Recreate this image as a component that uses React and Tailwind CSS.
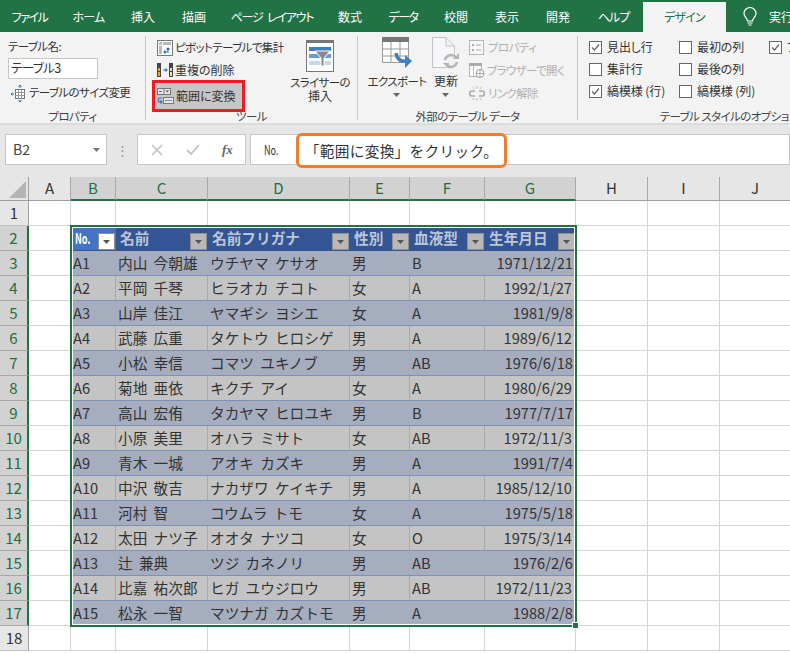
import React from "react";

const font = { fontFamily: '"Noto Sans CJK JP", sans-serif' };

const tabs = [
  ["ファイル", "w-[59px] tracking-[-1.5px]"],
  ["ホーム", "w-[59px] tracking-[-0.8px]"],
  ["挿入", "w-[50px]"],
  ["描画", "w-[52px]"],
  ["ページ レイアウト", "w-[104px] tracking-[-1.2px] [word-spacing:3px]"],
  ["数式", "w-[52px]"],
  ["データ", "w-[54px] tracking-[-1.5px]"],
  ["校閲", "w-[52px]"],
  ["表示", "w-[50px]"],
  ["開発", "w-[52px]"],
  ["ヘルプ", "w-[59px] tracking-[-1px]"],
];

const rows = [
  ["A1", "内山 今朝雄", "ウチヤマ ケサオ", "男", "B", "1971/12/21"],
  ["A2", "平岡 千琴", "ヒラオカ チコト", "女", "A", "1992/1/27"],
  ["A3", "山岸 佳江", "ヤマギシ ヨシエ", "女", "A", "1981/9/8"],
  ["A4", "武藤 広重", "タケトウ ヒロシゲ", "男", "A", "1989/6/12"],
  ["A5", "小松 幸信", "コマツ ユキノブ", "男", "AB", "1976/6/18"],
  ["A6", "菊地 亜依", "キクチ アイ", "女", "A", "1980/6/29"],
  ["A7", "高山 宏侑", "タカヤマ ヒロユキ", "男", "B", "1977/7/17"],
  ["A8", "小原 美里", "オハラ ミサト", "女", "AB", "1972/11/3"],
  ["A9", "青木 一城", "アオキ カズキ", "男", "A", "1991/7/4"],
  ["A10", "中沢 敬吉", "ナカザワ ケイキチ", "男", "A", "1985/12/10"],
  ["A11", "河村 智", "コウムラ トモ", "女", "A", "1975/5/18"],
  ["A12", "太田 ナツ子", "オオタ ナツコ", "女", "O", "1975/3/14"],
  ["A13", "辻 兼典", "ツジ カネノリ", "男", "AB", "1976/2/6"],
  ["A14", "比嘉 祐次郎", "ヒガ ユウジロウ", "男", "AB", "1972/11/23"],
  ["A15", "松永 一智", "マツナガ カズトモ", "男", "A", "1988/2/8"],
];

const grid = "grid grid-cols-[29px_42px_45px_92px_142px_60px_75px_91px_72px_72px_71px]";

function Check({ on, label }) {
  return (
    <div className="flex h-[22px] items-center gap-[5px] whitespace-nowrap text-[12px] tracking-[-0.1px]">
      <span className="flex h-[13px] w-[13px] shrink-0 items-center justify-center border border-[#666] bg-white">
        {on && (
          <svg width="11" height="11" viewBox="0 0 11 11">
            <path d="M2 5.5 L4.5 8 L9 2.5" fill="none" stroke="#666" strokeWidth="1.2" />
          </svg>
        )}
      </span>
      <span>{label}</span>
    </div>
  );
}

function Group({ width, label, children, last }) {
  return (
    <>
      <div className={`flex h-[88px] shrink-0 flex-col ${width}`}>
        <div className="min-h-0 flex-1">{children}</div>
        <div className="h-[16px] whitespace-nowrap text-center leading-[16px] text-[#444]">{label}</div>
      </div>
      {!last && <div className="h-[84px] w-px shrink-0 bg-[#c6c6c6]" />}
    </>
  );
}

function Arrow({ color = "#444" }) {
  return (
    <svg width="8" height="4" viewBox="0 0 8 4" className="block">
      <path d="M0 0 H7 L3.5 4 Z" fill={color} />
    </svg>
  );
}

function PivotIcon() {
  return (
    <svg width="16" height="16" viewBox="0 0 16 16" className="shrink-0">
      <rect x="0.5" y="0.5" width="15" height="15" fill="#fff" stroke="#777" />
      <rect x="2" y="2" width="3" height="3" fill="#bbb" />
      <rect x="6" y="2" width="8" height="3" fill="#bbb" />
      <rect x="2" y="6" width="3" height="8" fill="#bbb" />
      <path d="M7 12 H11 V8 M9.5 9.5 L11 8 L12.5 9.5 M8.5 10.5 L7 12 L8.5 13.5" fill="none" stroke="#2b74b8" strokeWidth="1.2" />
    </svg>
  );
}

function DupIcon() {
  return (
    <svg width="16" height="16" viewBox="0 0 16 16" className="shrink-0">
      <rect x="0" y="1" width="4" height="14" fill="#444" />
      <rect x="12" y="1" width="4" height="14" fill="#444" />
      <rect x="1" y="6" width="2" height="3" fill="#e8a33d" />
      <rect x="1" y="10" width="2" height="4" fill="#e8a33d" />
      <rect x="13" y="6" width="2" height="3" fill="#f3d9a8" />
      <rect x="13" y="10" width="2" height="4" fill="#f3d9a8" />
      <path d="M6 8 H10 M8.5 6.5 L10 8 L8.5 9.5" fill="none" stroke="#2b74b8" strokeWidth="1.1" />
    </svg>
  );
}

function ConvertIcon() {
  return (
    <svg width="17" height="17" viewBox="0 0 17 17" className="shrink-0">
      <rect x="0.5" y="0.5" width="13" height="6" fill="#e6e6e6" stroke="#777" />
      <line x1="7" y1="0.5" x2="7" y2="6.5" stroke="#777" />
      <rect x="2" y="3" width="3" height="1" fill="#2b74b8" />
      <path d="M8.5 2.5 H12 L10.2 4.5 Z" fill="#555" />
      <rect x="6.5" y="9.5" width="10" height="6" fill="#e6e6e6" stroke="#777" />
      <line x1="8" y1="12.5" x2="15" y2="12.5" stroke="#888" />
      <path d="M5 10 H3 C1.5 10 1 11 1 12 C1 13 1.5 14 3 14 H5 M3.5 12.5 L5 14 L3.5 15.5" fill="none" stroke="#2b74b8" strokeWidth="1.1" />
    </svg>
  );
}

function SlicerIcon() {
  return (
    <svg width="28" height="32" viewBox="0 0 28 32" className="block">
      <rect x="0.5" y="0.5" width="27" height="31" fill="#fff" stroke="#777" />
      <rect x="0" y="0" width="28" height="3" fill="#777" />
      <rect x="3" y="7" width="22" height="4" fill="#3f7fc0" />
      <rect x="3" y="14" width="22" height="4" fill="#6c9dd0" />
      <rect x="3" y="21" width="22" height="4" fill="#c5d9ef" />
      <path d="M9 11 H24 L18 18 V27 L15 25 V18 Z" fill="#8a8a8a" stroke="#fff" />
    </svg>
  );
}

function ExportIcon() {
  return (
    <svg width="32" height="33" viewBox="0 0 32 33" className="block">
      <rect x="1" y="0" width="27" height="5" fill="#777" />
      <path d="M1.5 5 V25.5 H27.5 V5 M1.5 12 H27.5 M1.5 19 H27.5 M10 5 V25 M19 5 V25" fill="#fff" stroke="#999" />
      <path d="M15 16 C16 23 20 25 27 24" fill="none" stroke="#3f7fc0" strokeWidth="3.5" />
      <path d="M24 18 L31 24 L24 31 Z" fill="#3f7fc0" />
    </svg>
  );
}

function RefreshIcon() {
  return (
    <svg width="28" height="33" viewBox="0 0 28 33" className="block">
      <path d="M0.5 0.5 H14 L22.5 9 V30.5 H0.5 Z M14 0.5 V9 H22.5" fill="#f8f6fa" stroke="#c4c4c4" />
      <circle cx="19" cy="24" r="8" fill="#f3f3f3" />
      <path d="M13 23 A6 6 0 0 1 24 21 M25 25 A6 6 0 0 1 14 27" fill="none" stroke="#b4b4b4" strokeWidth="2.5" />
      <path d="M21 22 H27 V16 Z M11 26 H17 V32 Z" fill="#b4b4b4" />
    </svg>
  );
}

function PropIcon() {
  return (
    <svg width="15" height="15" viewBox="0 0 15 15" className="shrink-0">
      <rect x="0.5" y="0.5" width="14" height="14" fill="#f8f8f8" stroke="#b5b5b5" />
      <rect x="3" y="4" width="2" height="2" fill="#aaa" />
      <rect x="3" y="9" width="2" height="2" fill="#aaa" />
      <line x1="7" y1="5" x2="12" y2="5" stroke="#aaa" />
      <line x1="7" y1="10" x2="12" y2="10" stroke="#aaa" />
    </svg>
  );
}

function BrowserIcon() {
  return (
    <svg width="16" height="15" viewBox="0 0 16 15" className="shrink-0">
      <rect x="0.5" y="0.5" width="12" height="13" fill="#fff" stroke="#b5b5b5" />
      <rect x="0" y="0" width="13" height="3" fill="#aaa" />
      <line x1="4.5" y1="3" x2="4.5" y2="13" stroke="#bbb" />
      <circle cx="11" cy="10.5" r="4" fill="#fff" stroke="#999" />
      <path d="M7 10.5 H15 M11 6.5 V14.5" stroke="#aaa" />
    </svg>
  );
}

function LinkIcon() {
  return (
    <svg width="16" height="16" viewBox="0 0 16 16" className="shrink-0">
      <path d="M6 5 H3 A2.5 2.5 0 0 0 3 10 H6 M10 5 H13 A2.5 2.5 0 0 1 13 10 H10" fill="none" stroke="#aaa" strokeWidth="1.6" />
      <path d="M8 0 V3 M4 1 L5 3 M12 1 L11 3 M8 12 V15 M4 14 L5 12 M12 14 L11 12" stroke="#bbb" />
    </svg>
  );
}

function ResizeIcon() {
  return (
    <svg width="17" height="17" viewBox="0 0 17 17" className="shrink-0">
      <rect x="4.5" y="4.5" width="9" height="9" fill="#fff" stroke="#777" />
      <path d="M4.5 7.5 H13.5 M4.5 10.5 H13.5 M7.5 4.5 V13.5 M10.5 4.5 V13.5" stroke="#999" />
      <path d="M9 0 V3 M7.5 1.5 L9 0 L10.5 1.5 M9 15 V17 M7.5 15.5 L9 17 L10.5 15.5 M0 9 H3 M1.5 7.5 L0 9 L1.5 10.5" fill="none" stroke="#2b74b8" />
    </svg>
  );
}

function FilterBtn({ active }) {
  return (
    <span
      className={`absolute right-[1px] top-[7px] flex h-[17px] w-[17px] items-center justify-center border border-[#8f8f8f] ${active ? "bg-white" : "bg-[#b8b8b8]"}`}
    >
      <Arrow color="#555" />
    </span>
  );
}

function ColHead({ label, selected }) {
  return (
    <div
      className={`flex h-[24px] items-center justify-center border-r border-[#a8a8a8] text-[15px] ${
        selected ? "bg-[#d2d2d2] text-[#1e6e42]" : "bg-[#e6e6e6] text-[#333]"
      } ${selected ? "border-b-2 border-b-[#217346]" : "border-b border-b-[#9f9f9f]"}`}
    >
      {label}
    </div>
  );
}

function RowHead({ n, selected }) {
  return (
    <div
      className={`flex h-[25px] items-center justify-center border-b text-[15px] ${
        selected
          ? "border-[#a8a8a8] border-r-2 border-r-[#217346] bg-[#d2d2d2] text-[#1e6e42]"
          : "border-[#c0c0c0] border-r border-r-[#9f9f9f] bg-[#e6e6e6] text-[#333]"
      }`}
    >
      {n}
    </div>
  );
}

function Empty() {
  return <div className="h-[25px] border-b border-r border-[#d4d4d4] bg-white" />;
}

export default function App() {
  return (
    <div className="relative h-[653px] w-[790px] overflow-hidden bg-white text-[#333]" style={font}>
      {/* tabs */}
      <div className="flex h-[32px] items-end bg-[#217346] text-[12px] text-white [font-feature-settings:'palt']">
        {tabs.map(([t, w]) => (
          <div key={t} className={`flex h-[30px] shrink-0 items-center justify-center ${w} whitespace-nowrap`}>
            {t}
          </div>
        ))}
        <div className="flex h-[30px] w-[83px] shrink-0 items-center justify-center bg-[#f3f3f3] tracking-[-0.8px] text-[#217346]">デザイン</div>
        <div className="ml-[17px] flex h-[30px] shrink-0 items-center gap-[12px] whitespace-nowrap">
          <svg width="14" height="20" viewBox="0 0 14 20">
            <path d="M4.5 14 C4.5 11 1 10 1 6.5 A6 6 0 0 1 13 6.5 C13 10 9.5 11 9.5 14 Z" fill="none" stroke="#fff" strokeWidth="1.2" />
            <path d="M4.5 16 H9.5 M5.5 18 H8.5" stroke="#fff" strokeWidth="1.2" />
          </svg>
          <span>実行</span>
        </div>
      </div>

      {/* ribbon */}
      <div className="flex h-[93px] items-start overflow-hidden border-b-2 border-[#dcdcdc] bg-[#f3f3f3] pt-[4px] text-[11.5px] tracking-[-0.6px] text-[#333] [font-feature-settings:'palt']">
        <Group width="w-[145px]" label="プロパティ">
          <div className="pl-[8px] pt-[1px]">
            <div className="h-[18px] leading-[18px]">テーブル名:</div>
            <div className="mt-[3px] flex h-[21px] w-[90px] items-center border border-[#c6c6c6] bg-white pl-[2px] text-[12.5px]">テーブル3</div>
            <div className="mt-[3px] flex h-[22px] items-center gap-[1px] pl-[3px] whitespace-nowrap">
              <ResizeIcon />
              <span>テーブルのサイズ変更</span>
            </div>
          </div>
        </Group>
        <Group width="w-[211px]" label="ツール">
          <div className="flex pl-[6px]">
            <div className="w-[133px] shrink-0">
              <div className="flex h-[23px] items-center gap-[2px] pl-[5px] whitespace-nowrap"><PivotIcon /><span>ピボットテーブルで集計</span></div>
              <div className="flex h-[21px] items-center gap-[2px] pl-[5px] text-[12px] tracking-normal whitespace-nowrap"><DupIcon /><span>重複の削除</span></div>
              <div className="flex h-[32px] w-[93px] items-center gap-[2px] border-[3px] border-[#ed1c24] bg-[#c6c6c6] pl-[2px] text-[12px] tracking-normal whitespace-nowrap"><ConvertIcon /><span>範囲に変換</span></div>
            </div>
            <div className="flex w-[70px] shrink-0 flex-col items-center pt-[4px] text-center leading-[14px]">
              <SlicerIcon />
              <div className="mt-[3px] whitespace-nowrap">スライサーの<br /><span className="text-[12px] tracking-normal">挿入</span></div>
            </div>
          </div>
        </Group>
        <Group width="w-[219px]" label="外部のテーブル データ">
          <div className="flex pl-[10px]">
            <div className="flex w-[58px] shrink-0 flex-col items-center pt-[1px]">
              <ExportIcon />
              <div className="mt-[2px] h-[18px] leading-[18px] whitespace-nowrap">エクスポート</div>
              <div className="mt-[3px]"><Arrow color="#666" /></div>
            </div>
            <div className="flex w-[40px] shrink-0 flex-col items-center pt-[1px]">
              <RefreshIcon />
              <div className="mt-[2px] h-[18px] text-[12px] leading-[18px] tracking-normal">更新</div>
              <div className="mt-[3px]"><Arrow color="#666" /></div>
            </div>
            <div className="pl-[3px] text-[#b0b0b0]">
              <div className="flex h-[23px] items-center gap-[4px] whitespace-nowrap"><PropIcon /><span>プロパティ</span></div>
              <div className="flex h-[23px] items-center gap-[2px] whitespace-nowrap"><BrowserIcon /><span>ブラウザーで開く</span></div>
              <div className="flex h-[23px] items-center gap-[3px] whitespace-nowrap"><LinkIcon /><span>リンク解除</span></div>
            </div>
          </div>
        </Group>
        <Group width="w-[302px]" label="テーブル スタイルのオプション" last>
          <div className="flex pl-[11px]">
            <div className="w-[90px] shrink-0">
              <Check on label="見出し行" />
              <Check label="集計行" />
              <Check on label="縞模様 (行)" />
            </div>
            <div className="w-[90px] shrink-0">
              <Check label="最初の列" />
              <Check label="最後の列" />
              <Check label="縞模様 (列)" />
            </div>
            <div className="shrink-0"><Check on label="フィルター ボタン" /></div>
          </div>
        </Group>
      </div>

      {/* formula bar */}
      <div className="flex h-[52px] items-start border-b border-[#e6e6e6] bg-[#e6e6e6] pt-[9px]">
        <div className="ml-[5px] flex h-[31px] w-[102px] shrink-0 items-center justify-between border border-[#c6c6c6] bg-white pl-[7px] pr-[5px] text-[14px] text-[#444]">
          <span>B2</span>
          <Arrow color="#777" />
        </div>
        <div className="flex h-[31px] w-[30px] shrink-0 items-center justify-center text-[13px] leading-none text-[#999]">⋮</div>
        <div className="flex h-[31px] w-[109px] shrink-0 items-center border border-[#c6c6c6] bg-white text-[#bbb]">
          <svg width="12" height="12" viewBox="0 0 12 12" className="ml-[13px]"><path d="M1 1 L11 11 M11 1 L1 11" stroke="#c0c0c0" strokeWidth="1.6" /></svg>
          <svg width="14" height="12" viewBox="0 0 14 12" className="ml-[23px]"><path d="M1 6 L5 10 L13 1" fill="none" stroke="#c0c0c0" strokeWidth="1.8" /></svg>
          <span className="ml-[22px] text-[13px] font-bold italic text-[#666]" style={{ fontFamily: '"Liberation Serif", serif' }}>fx</span>
        </div>
        <div className="ml-[4px] flex h-[31px] flex-1 items-center border border-[#c6c6c6] bg-white pl-[13px] text-[#333]">
          <span className="inline-block origin-left scale-x-[0.7] text-[13px]">No.</span>
        </div>
      </div>

      {/* callout */}
      <div className="absolute left-[296px] top-[133px] flex h-[35px] w-[211px] items-center justify-center whitespace-nowrap rounded-[6px] border-[3px] border-[#ed7d31] bg-white text-[14.67px] tracking-[0.3px] text-[#333]">
        「範囲に変換」をクリック。
      </div>

      {/* sheet */}
      <div className={grid}>
        <div className="flex h-[24px] items-end justify-end border-b border-r border-[#9f9f9f] bg-[#e6e6e6] p-[2px]">
          <svg width="17" height="17" viewBox="0 0 17 17"><path d="M17 0 V17 H0 Z" fill="#b5b5b5" /></svg>
        </div>
        {["A", "B", "C", "D", "E", "F", "G", "H", "I", "J"].map((c) => (
          <ColHead key={c} label={c} selected={"BCDEFG".includes(c)} />
        ))}

        <RowHead n={1} />
        {Array.from({ length: 10 }).map((_, i) => <Empty key={i} />)}

        <RowHead n={2} selected />
        <Empty />
        {[
          ["No.", true],
          ["名前"],
          ["名前フリガナ"],
          ["性別"],
          ["血液型"],
          ["生年月日"],
        ].map(([h, act]) => (
          <div
            key={h}
            className={`relative flex h-[25px] items-center whitespace-nowrap border-b border-[#335593] pl-[4px] text-[14.67px] font-bold ${act ? "bg-[#4472c4] text-white" : "bg-[#335593] text-[#bcc6d9]"}`}
          >
            <span className={act ? "inline-block origin-left scale-x-[0.65] text-[14px]" : ""}>{h}</span>
            <FilterBtn active={act} />
          </div>
        ))}
        {Array.from({ length: 3 }).map((_, i) => <Empty key={i} />)}

        {rows.map((r, i) => {
          const band = i % 2 === 0;
          return (
            <React.Fragment key={r[0]}>
              <RowHead n={i + 3} selected />
              <Empty />
              {r.map((v, j) => (
                <div
                  key={j}
                  className={`flex h-[25px] items-center overflow-hidden whitespace-nowrap border-b border-[#7c90bd] text-[14.67px] text-[#333] [word-spacing:3px] ${
                    band ? "bg-[#a6adbe]" : "border-r border-r-[#a9a9a9] bg-[#c4c4c4]"
                  } ${j === 5 ? "justify-end pr-[3px]" : "pl-[2px]"}`}
                >
                  {v}
                </div>
              ))}
              {Array.from({ length: 3 }).map((_, k) => <Empty key={k} />)}
            </React.Fragment>
          );
        })}

        <RowHead n={18} />
        {Array.from({ length: 10 }).map((_, i) => <Empty key={i} />)}
      </div>

      {/* selection */}
      <div className="pointer-events-none absolute left-[70px] top-[225px] h-[402px] w-[507px] border-2 border-[#217346]">
        <div className="absolute inset-0 border border-white" />
        <div className="absolute -bottom-[4px] -right-[4px] box-content h-[5px] w-[5px] border border-white bg-[#217346]" />
      </div>
    </div>
  );
}
